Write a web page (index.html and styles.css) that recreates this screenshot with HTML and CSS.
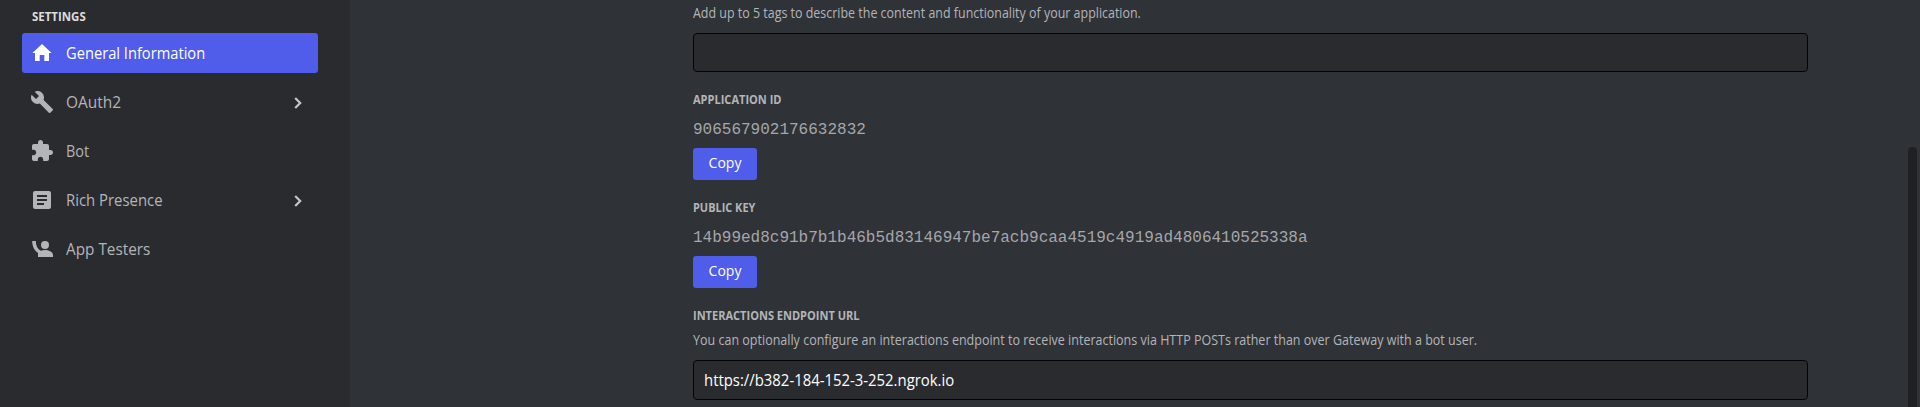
FILE: index.html
```
<!DOCTYPE html>
<html lang="en">
<head>
<meta charset="utf-8">
<title>General Information</title>
<link rel="stylesheet" href="styles.css">
</head>
<body>
<div class="app">
  <nav class="sidebar">
    <h2 class="sidebar-title"><span class="fit t-settings">Settings</span></h2>
    <a class="nav-item active">
      <svg class="icon" viewBox="0 0 24 24"><path d="M9.700 20v-6h4.600v6H19v-8h2.600L12 3 2.400 12H5v8z"/></svg>
      <div class="nav-label"><span class="fit t-general">General Information</span></div>
    </a>
    <a class="nav-item">
      <svg class="icon" viewBox="0 0 24 24"><path d="M22.7 19l-9.1-9.1c.9-2.3.4-5-1.5-6.9-2-2-5-2.4-7.4-1.3L9 6 6 9 1.6 4.7C.4 7.1.9 10.1 2.9 12.1c1.900 1.900 4.600 2.400 6.900 1.500l9.100 9.100c.4.4 1 .4 1.400 0l2.300-2.300c.5-.4.5-1.100.1-1.400z"/></svg>
      <div class="nav-label"><span class="fit t-oauth">OAuth2</span></div>
      <svg class="chevron" viewBox="0 0 8 12"><path d="M1.200 1l5 5-5 5"/></svg>
    </a>
    <a class="nav-item">
      <svg class="icon" viewBox="0 0 24 24"><path d="M20.500 11H19V7c0-1.100-.9-2-2-2h-4V3.500C13 2.120 11.880 1 10.500 1S8 2.120 8 3.500V5H4c-1.100 0-1.990.9-1.990 2v3.800H3.500c1.490 0 2.700 1.210 2.700 2.700s-1.210 2.700-2.700 2.700H2V20c0 1.100.9 2 2 2h3.800v-1.500c0-1.490 1.210-2.700 2.700-2.700s2.700 1.210 2.700 2.700V22H17c1.100 0 2-.9 2-2v-4h1.500c1.380 0 2.500-1.120 2.500-2.500S21.880 11 20.500 11z"/></svg>
      <div class="nav-label"><span class="fit t-bot">Bot</span></div>
    </a>
    <a class="nav-item">
      <svg class="icon" viewBox="0 0 24 24"><path d="M19 3H5c-1.100 0-2 .9-2 2v14c0 1.100.9 2 2 2h14c1.100 0 2-.9 2-2V5c0-1.100-.9-2-2-2zm-5 14H7v-2h7v2zm3-4H7v-2h10v2zm0-4H7V7h10v2z"/></svg>
      <div class="nav-label"><span class="fit t-rich">Rich Presence</span></div>
      <svg class="chevron" viewBox="0 0 8 12"><path d="M1.200 1l5 5-5 5"/></svg>
    </a>
    <a class="nav-item">
      <svg class="icon" viewBox="0 0 24 24"><circle cx="15" cy="8" r="4"/><path d="M2.200 4h3.600c0 4.500 1.700 8 5 9.800 1.200-.5 2.800-.8 4.200-.8 3.200 0 8 1.700 8 4.800V20H8v-4.200C4.500 13.700 2.200 9.500 2.200 4z"/></svg>
      <div class="nav-label"><span class="fit t-testers">App Testers</span></div>
    </a>
  </nav>
  <main class="content">
    <section class="field">
      <p class="hint"><span class="fit t-tags">Add up to 5 tags to describe the content and functionality of your application.</span></p>
      <div class="input"></div>
    </section>
    <section class="field">
      <h3 class="label"><span class="fit t-appid">Application ID</span></h3>
      <div class="mono">906567902176632832</div>
      <button class="copy">Copy</button>
    </section>
    <section class="field">
      <h3 class="label"><span class="fit t-key">Public Key</span></h3>
      <div class="mono">14b99ed8c91b7b1b46b5d83146947be7acb9caa4519c4919ad4806410525338a</div>
      <button class="copy">Copy</button>
    </section>
    <section class="field">
      <h3 class="label"><span class="fit t-url">Interactions Endpoint URL</span></h3>
      <p class="hint spaced"><span class="fit t-endpoint">You can optionally configure an interactions endpoint to receive interactions via HTTP POSTs rather than over Gateway with a bot user.</span></p>
      <div class="input endpoint"><span class="fit t-address">https://b382-184-152-3-252.ngrok.io</span></div>
    </section>
  </main>
  <div class="scroll-track"><div class="scroll-thumb"></div></div>
</div>
</body>
</html>
```
FILE: styles.css
```
* { box-sizing: border-box; }
body {
  margin: 0;
  height: 407px;
  overflow: hidden;
  background: #2f3237;
  font-family: "Open Sans", "Noto Sans", sans-serif;
}
h2, h3, p { margin: 0; }
.app { display: flex; height: 407px; }

/* Narrows a run of text to the proportions of the interface face */
.fit {
  display: inline-block;
  transform-origin: 0 50%;
  white-space: nowrap;
}
.t-settings { transform: scaleX(.955); }
.t-general { transform: scaleX(.917); }
.t-oauth { transform: scaleX(.965); }
.t-bot { transform: scaleX(.9); }
.t-rich { transform: scaleX(.93); }
.t-testers { transform: scaleX(.957); }
.t-tags { transform: scaleX(.889); }
.t-endpoint { transform: scaleX(.894); }
.t-appid { transform: scaleX(.92); }
.t-key { transform: scaleX(.912); }
.t-url { transform: scaleX(.919); }
.t-address { transform: scaleX(.93); }

.sidebar {
  width: 350px;
  flex: none;
  padding: 7px 32px 0 22px;
  background: #2a2b2f;
  display: flex;
  flex-direction: column;
  gap: 9px;
}
.sidebar-title {
  height: 17px;
  padding-left: 10px;
  font-size: 12px;
  line-height: 20px;
  font-weight: 700;
  text-transform: uppercase;
  color: #dcddde;
}
.nav-item {
  display: flex;
  align-items: center;
  height: 40px;
  padding: 0 16px 0 8px;
  border-radius: 3px;
  color: #b4b5b9;
}
.nav-item.active { background: #505cea; color: #fff; }
.icon { width: 24px; height: 24px; fill: currentColor; }
.nav-label {
  margin-left: 12px;
  padding-bottom: 1px;
  flex: 1;
  font-size: 16px;
  line-height: 24px;
}
.chevron {
  width: 8px;
  height: 12px;
  margin-top: 1px;
  fill: none;
  stroke: #c4c6c9;
  stroke-width: 2.2;
}
.content {
  width: 1115px;
  margin-left: 343px;
  flex: none;
  padding-top: 3px;
}
.hint {
  height: 20px;
  font-size: 14px;
  line-height: 20px;
  color: #b4b5b8;
}
.spaced { margin-top: 6px; }
.input {
  height: 39px;
  margin-top: 10px;
  border: 1px solid #040405;
  border-radius: 4px;
  background: #2a2b2f;
}
.label {
  height: 16px;
  margin-top: 20px;
  font-size: 12px;
  line-height: 16px;
  font-weight: 700;
  text-transform: uppercase;
  color: #b4b5b8;
}
.mono {
  height: 20px;
  margin-top: 10px;
  padding-top: 2px;
  font: 16px/20px "Liberation Mono", monospace;
  color: #a5a7aa;
}
.copy {
  display: block;
  width: 64px;
  height: 32px;
  margin: 10px 0 0;
  padding: 0 0 2px;
  border: 0;
  border-radius: 3px;
  background: #505cea;
  color: #fff;
  font: 500 14px/30px "Open Sans", "Noto Sans", sans-serif;
}
.endpoint {
  height: 40px;
  padding-left: 10px;
  color: #fff;
  font-size: 16px;
  line-height: 38px;
}
.scroll-track {
  display: flex;
  width: 9px;
  height: 407px;
  margin-left: 100px;
  padding-top: 147px;
}
.scroll-thumb { flex: 1; border-radius: 4px 4px 0 0; background: #1f2023; }
```
